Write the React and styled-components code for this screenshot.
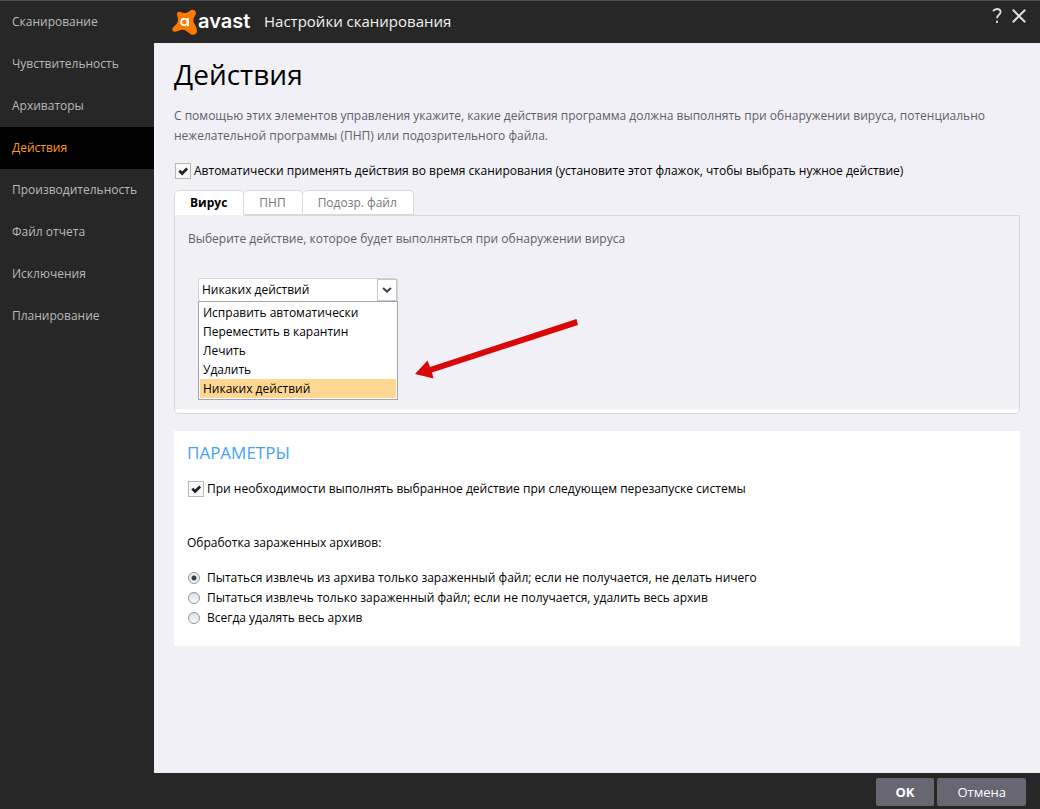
import React, { useState } from "react";
import styled, { createGlobalStyle } from "styled-components";

const GlobalStyle = createGlobalStyle`
  *, *::before, *::after { box-sizing: border-box; }
  body {
    margin: 0;
    background: #272727;
    font-family: "Open Sans", "Noto Sans", sans-serif;
    font-size: 12px;
    line-height: 20px;
    color: #000;
  }
  h1, h2, p, ul { margin: 0; padding: 0; font-weight: 400; }
  button, select, input { font: inherit; margin: 0; }
`;

const Window = styled.div`
  display: flex;
  min-height: 100vh;
  border-top: 1px solid #505050;
`;

const Sidebar = styled.nav`
  flex: 0 0 154px;
  display: flex;
  flex-direction: column;
`;

const SidebarLink = styled.a`
  padding: 11px 12px;
  text-decoration: none;
  white-space: nowrap;
  color: ${(p) => (p.$active ? "#ff9c1a" : "#b9b9b9")};
  background: ${(p) => (p.$active ? "#000" : "transparent")};
`;

const Page = styled.div`
  flex: 1;
  min-width: 0;
  display: flex;
  flex-direction: column;
`;

const Header = styled.header`
  height: 42px;
  display: flex;
  align-items: center;
  padding: 0 10px 0 18px;
`;

const HeaderTitle = styled.div`
  flex: 1;
  padding: 0 0 2px 10px;
  font-size: 15px;
  color: #f2f2f2;
`;

const IconButton = styled.button`
  display: flex;
  width: 22px;
  height: 22px;
  padding: 0;
  margin-bottom: 12px;
  align-items: center;
  justify-content: center;
  border: 0;
  background: transparent;
  color: #dcdcd8;
`;

const Content = styled.main`
  flex: 1;
  padding: 12px 20px;
  background: #f1f0f6;
`;

const Title = styled.h1`
  font-size: 28px;
  line-height: 38px;
`;

const Description = styled.p`
  margin: 13px 0 15px;
  color: #5f606b;
`;

const CheckLabel = styled.label`
  display: flex;
  align-items: center;
  gap: 3px;
  padding-left: 1px;
`;

const Checkbox = styled.input.attrs({ type: "checkbox" })`
  appearance: none;
  flex: none;
  width: 16px;
  height: 16px;
  border: 1px solid #b8b8b8;
  background: #f9f9f9;
  &:checked {
    background: #f9f9f9
      url("data:image/svg+xml,%3Csvg xmlns='http://www.w3.org/2000/svg' viewBox='0 0 14 14'%3E%3Cpath d='M3.3 6.6l2.8 2.9 5-5' fill='none' stroke='%23222' stroke-width='2.7'/%3E%3C/svg%3E")
      center / 14px 14px no-repeat;
  }
`;

const TabList = styled.div`
  display: flex;
  margin-top: 9px;
`;

const Tab = styled.button`
  height: 25px;
  padding: 0 16px 0 15px;
  border: 1px solid #d8d9df;
  border-left-width: ${(p) => (p.$first ? "1px" : "0")};
  border-bottom-color: ${(p) => (p.$active ? "#fff" : "#d8d9df")};
  border-radius: 5px 5px 0 0;
  background: #fff;
  line-height: 20px;
  font-weight: ${(p) => (p.$active ? 700 : 400)};
  color: ${(p) => (p.$active ? "#000" : "#777")};
`;

const TabPanel = styled.section`
  position: relative;
  height: 199px;
  padding: 14px 13px;
  border: 1px solid #d8d9df;
  border-top: 0;
  border-radius: 0 0 5px 5px;
  background: linear-gradient(#d8d9df, #d8d9df) right top / calc(100% - 69px) 1px no-repeat,
    linear-gradient(#fff, #fff) left bottom / 100% 4px no-repeat;
`;

const PanelText = styled.p`
  color: #5f606b;
`;

const Dropdown = styled.div`
  position: relative;
  width: 200px;
  margin: 29px 0 0 10px;
`;

const Select = styled.select`
  appearance: none;
  display: block;
  width: 100%;
  height: 24px;
  padding: 0 30px 0 3px;
  border: 1px solid #d0d0d5;
  border-radius: 3px;
  background: #fff;
  color: #000;
  line-height: 20px;
`;

const SelectArrow = styled.span`
  position: absolute;
  top: 1px;
  right: 1px;
  display: flex;
  width: 20px;
  height: 22px;
  align-items: center;
  justify-content: center;
  border: 1px solid #c8c8cc;
  background: #fff;
  pointer-events: none;
`;

const Options = styled.ul`
  position: absolute;
  z-index: 1;
  top: 23px;
  left: 0;
  right: 0;
  padding: 1px;
  list-style: none;
  border: 1px solid #a3a4ae;
  background: #fff;
`;

const Option = styled.li`
  padding: 0 3px;
  line-height: 19px;
  background: ${(p) => (p.$selected ? "#ffd793" : "transparent")};
`;

const Arrow = styled.svg`
  position: absolute;
  top: 103px;
  left: 240px;
`;

const Card = styled.section`
  margin-top: 17px;
  padding: 10px 13px 18px;
  background: #fff;
`;

const CardTitle = styled.h2`
  margin-bottom: 14px;
  font-size: 17px;
  line-height: 24px;
  color: #45a3f5;
`;

const RadioGroup = styled.fieldset`
  margin: 34px 0 0;
  padding: 0;
  border: 0;
`;

const Legend = styled.legend`
  padding: 0 0 15px;
`;

const RadioLabel = styled.label`
  display: flex;
  align-items: center;
  gap: 7px;
  padding-left: 1px;
`;

const Radio = styled.input.attrs({ type: "radio" })`
  appearance: none;
  flex: none;
  width: 12px;
  height: 12px;
  border: 1px solid #92969b;
  border-radius: 50%;
  background: linear-gradient(#dcdfe3, #fbfbfb);
  &:checked {
    background: radial-gradient(circle, #363d4c 0 2px, #eceef0 3px);
  }
`;

const Footer = styled.footer`
  display: flex;
  justify-content: flex-end;
  gap: 3px;
  padding: 5px 14px 3px;
`;

const FooterButton = styled.button`
  height: 28px;
  padding: 0 20px;
  border: 0;
  border-radius: 2px;
  background: #676671;
  color: #fff;
  font-size: 13px;
  font-weight: ${(p) => (p.$primary ? 700 : 400)};
`;

const sections = ["Сканирование", "Чувствительность", "Архиваторы", "Действия", "Производительность", "Файл отчета", "Исключения", "Планирование"];
const tabs = ["Вирус", "ПНП", "Подозр. файл"];
const actions = ["Исправить автоматически", "Переместить в карантин", "Лечить", "Удалить", "Никаких действий"];
const archiveModes = [
  "Пытаться извлечь из архива только зараженный файл; если не получается, не делать ничего",
  "Пытаться извлечь только зараженный файл; если не получается, удалить весь архив",
  "Всегда удалять весь архив",
];

function Logo() {
  return (
    <svg width="82" height="28" viewBox="0 0 82 28" role="img" aria-label="avast">
      <path
        d="M5 6.500C4.600 4 6.800 3.200 9 4.200C12 5.600 15 5.200 17.500 3C19.500 1.200 23 1.500 23.800 4C24.600 6.600 21.800 8.500 21.300 11.500C20.800 15 25 18.500 25 22.700C25 26.300 21.500 28 18.300 26C14.500 23.600 13.500 21.300 9 22C5.500 22.500 2.500 25 .7 22.700C-1 20.200 3 18.200 5 15.300C7 12 5.500 9.500 5 6.500Z"
        fill="#ff7800"
      />
      <g fill="none" stroke="#fff" strokeWidth="1.800">
        <circle cx="12.300" cy="14" r="3.200" />
        <path d="M16 10V18.200" />
      </g>
      <text x="26" y="20" fill="#fff" fontFamily="Inter, sans-serif" fontWeight="600" fontSize="20">
        avast
      </text>
    </svg>
  );
}

export default function App() {
  const [tab, setTab] = useState(0);
  const [action, setAction] = useState(actions[4]);
  return (
    <>
      <GlobalStyle />
      <Window>
        <Sidebar>
          {sections.map((name) => (
            <SidebarLink key={name} href="#" $active={name === "Действия"}>
              {name}
            </SidebarLink>
          ))}
        </Sidebar>
        <Page>
          <Header>
            <Logo />
            <HeaderTitle>Настройки сканирования</HeaderTitle>
            <IconButton aria-label="Справка">
              <svg width="10" height="16" viewBox="0 0 10 16" fill="none" stroke="currentColor" strokeWidth="1.8">
                <path d="M1 3.200C2 1.600 3.500 1 5 1C7.200 1 8.600 2.200 8.600 4C8.600 6.800 5 6.800 5 10.200M5 12.800V15" />
              </svg>
            </IconButton>
            <IconButton aria-label="Закрыть">
              <svg width="14" height="14" viewBox="0 0 14 14" fill="none" stroke="currentColor" strokeWidth="2">
                <path d="M.8 .8L13.200 13.200M13.200 .8L.8 13.200" />
              </svg>
            </IconButton>
          </Header>
          <Content>
            <Title>Действия</Title>
            <Description>
              С помощью этих элементов управления укажите, какие действия программа должна выполнять при обнаружении вируса, потенциально нежелательной программы (ПНП) или подозрительного файла.
            </Description>
            <CheckLabel>
              <Checkbox defaultChecked />
              Автоматически применять действия во время сканирования (установите этот флажок, чтобы выбрать нужное действие)
            </CheckLabel>
            <TabList role="tablist">
              {tabs.map((name, i) => (
                <Tab key={name} role="tab" aria-selected={i === tab} $active={i === tab} $first={i === 0} onClick={() => setTab(i)}>
                  {name}
                </Tab>
              ))}
            </TabList>
            <TabPanel role="tabpanel">
              <PanelText id="action-label">Выберите действие, которое будет выполняться при обнаружении вируса</PanelText>
              <Dropdown>
                <Select aria-labelledby="action-label" value={action} onChange={(e) => setAction(e.target.value)}>
                  {actions.map((name) => (
                    <option key={name}>{name}</option>
                  ))}
                </Select>
                <SelectArrow>
                  <svg width="10" height="6" viewBox="0 0 10 6" fill="none" stroke="#444" strokeWidth="2">
                    <path d="M1 1L5 4.600L9 1" />
                  </svg>
                </SelectArrow>
                <Options role="listbox" aria-labelledby="action-label">
                  {actions.map((name) => (
                    <Option key={name} role="option" aria-selected={name === action} $selected={name === action} onClick={() => setAction(name)}>
                      {name}
                    </Option>
                  ))}
                </Options>
              </Dropdown>
              <Arrow width="164" height="62" viewBox="0 0 164 62" aria-hidden="true">
                <path d="M0 56L12.500 42.500L15 49L161.500 1L163 7L17 54.500L18.500 60.500Z" fill="#d90808" />
              </Arrow>
            </TabPanel>
            <Card>
              <CardTitle>ПАРАМЕТРЫ</CardTitle>
              <CheckLabel>
                <Checkbox defaultChecked />
                При необходимости выполнять выбранное действие при следующем перезапуске системы
              </CheckLabel>
              <RadioGroup>
                <Legend>Обработка зараженных архивов:</Legend>
                {archiveModes.map((name, i) => (
                  <RadioLabel key={name}>
                    <Radio name="archive" defaultChecked={i === 0} />
                    {name}
                  </RadioLabel>
                ))}
              </RadioGroup>
            </Card>
          </Content>
          <Footer>
            <FooterButton $primary>OK</FooterButton>
            <FooterButton>Отмена</FooterButton>
          </Footer>
        </Page>
      </Window>
    </>
  );
}
